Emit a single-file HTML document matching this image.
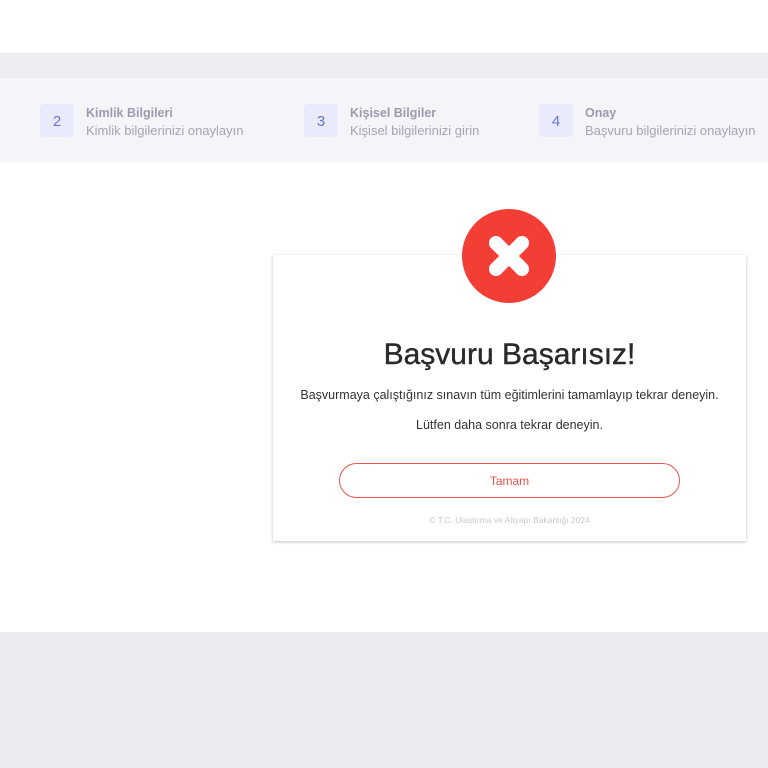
<!DOCTYPE html>
<html><head><meta charset="utf-8"><style>
*{margin:0;padding:0;box-sizing:border-box}
body{width:768px;height:768px;overflow:hidden;background:#fff;font-family:"Liberation Sans","DejaVu Sans",sans-serif;position:relative}
.a{position:absolute}
.step .n{position:absolute;width:34px;height:33px;background:#e9ebfa;border-radius:4px;color:#6a74cf;font-size:15px;text-align:center;line-height:35px}
.step .t{position:absolute;font-size:12.5px;font-weight:bold;color:#9a9cac;white-space:nowrap}
.step .s{position:absolute;font-size:13px;color:#a3a5b4;white-space:nowrap}
</style></head><body>
<div class="a" style="left:0;top:53px;width:768px;height:25px;background:#ececf1"></div>
<div class="a" style="left:0;top:78px;width:768px;height:84px;background:#f3f5f9"></div>
<div class="a" style="left:0;top:632px;width:768px;height:136px;background:#ebebf0"></div>

<div class="step"><div class="n" style="left:40px;top:104px">2</div><div class="t" style="left:86px;top:106px">Kimlik Bilgileri</div><div class="s" style="left:86px;top:123px">Kimlik bilgilerinizi onaylayın</div></div>
<div class="step"><div class="n" style="left:304px;top:104px">3</div><div class="t" style="left:350px;top:106px">Kişisel Bilgiler</div><div class="s" style="left:350px;top:123px">Kişisel bilgilerinizi girin</div></div>
<div class="step"><div class="n" style="left:539px;top:104px">4</div><div class="t" style="left:585px;top:106px">Onay</div><div class="s" style="left:585px;top:123px">Başvuru bilgilerinizi onaylayın</div></div>

<div class="a" style="left:273px;top:255px;width:473px;height:286px;background:#fff;box-shadow:0 1px 3px rgba(0,0,0,.25)"></div>
<svg class="a" style="left:462px;top:209px" width="94" height="94" viewBox="0 0 94 94">
<circle cx="47" cy="47" r="47" fill="#f33e36"/>
<path d="M34 34L60 60M60 34L34 60" stroke="#fff" stroke-width="14" stroke-linecap="round"/>
</svg>
<div class="a" style="left:273px;width:473px;top:338px;text-align:center;font-size:30px;color:#2a2a2a;-webkit-text-stroke:0.4px #2a2a2a">Başvuru Başarısız!</div>
<div class="a" style="left:273px;width:473px;top:388px;text-align:center;font-size:12.5px;color:#333">Başvurmaya çalıştığınız sınavın tüm eğitimlerini tamamlayıp tekrar deneyin.</div>
<div class="a" style="left:273px;width:473px;top:418px;text-align:center;font-size:12.5px;color:#333">Lütfen daha sonra tekrar deneyin.</div>
<div class="a" style="left:339px;top:463px;width:341px;height:35px;border:1px solid #e8534c;border-radius:18px;text-align:center;line-height:35px;font-size:12px;color:#e8534c">Tamam</div>
<div class="a" style="left:273px;width:473px;top:515px;text-align:center;font-size:8.5px;color:#c8c8c8">© T.C. Ulaştırma ve Altyapı Bakanlığı 2024</div>
</body></html>
